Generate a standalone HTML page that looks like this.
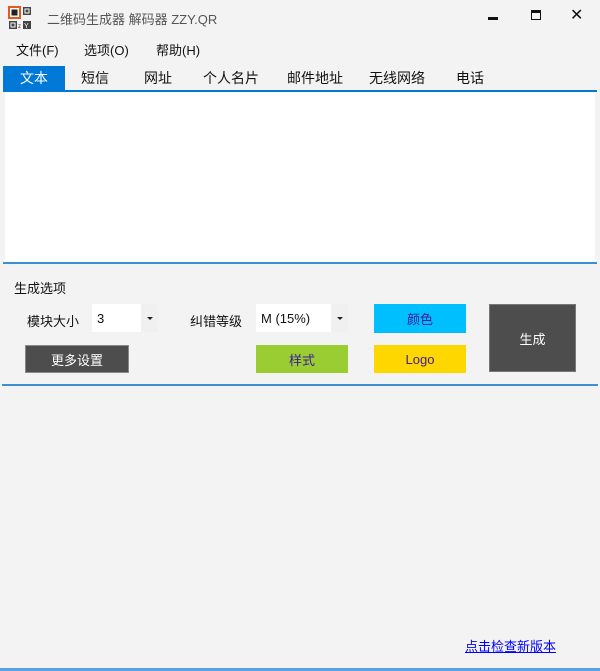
<!DOCTYPE html>
<html><head><meta charset="utf-8"><style>
*{margin:0;padding:0;box-sizing:border-box}
body{width:600px;height:671px;background:#f3f3f3;font-family:"Liberation Sans","Noto Sans CJK SC",sans-serif;font-size:13px;color:#111;position:relative;overflow:hidden}
.a{position:absolute}
.btn{position:absolute;display:flex;align-items:center;justify-content:center;font-size:13px}
.combo{position:absolute;background:#fff;height:28px;display:flex;align-items:center;padding-left:5px;font-size:13px}
.combo .dd{position:absolute;right:0;top:0;width:17px;height:28px;background:#f0f0f0;display:flex;align-items:center;justify-content:center}
.tri{width:0;height:0;border-left:3px solid transparent;border-right:3px solid transparent;border-top:3px solid #222}
</style></head><body>
<svg class="a" style="left:8px;top:6px" width="24" height="24" viewBox="0 0 24 24">
<rect x="0" y="0" width="13" height="13" fill="#e8581c"/><rect x="2" y="2" width="9" height="9" fill="#fff"/><rect x="3.5" y="3.5" width="6" height="6" fill="#222"/>
<rect x="15" y="1" width="8" height="8" fill="#444"/><rect x="16.5" y="2.5" width="5" height="5" fill="#fff"/><rect x="17.5" y="3.5" width="3" height="3" fill="#444"/>
<rect x="1" y="15" width="8" height="8" fill="#444"/><rect x="2.5" y="16.5" width="5" height="5" fill="#fff"/><rect x="3.5" y="17.5" width="3" height="3" fill="#444"/>
<text x="10" y="22" font-size="6" fill="#333" font-family="Liberation Sans">z</text><rect x="15" y="15" width="8" height="8" fill="#444"/><text x="16" y="22" font-size="7" fill="#fff" font-family="Liberation Sans">Y</text>
</svg>
<div class="a" style="left:47px;top:9px;font-size:13px;color:#555">二维码生成器 解码器 ZZY.QR</div>
<div class="a" style="left:488px;top:17px;width:10px;height:3px;background:#111"></div>
<div class="a" style="left:531px;top:10px;width:10px;height:10px;border:1.5px solid #111;border-top-width:3px"></div>
<div class="a" style="left:570px;top:5px;font-size:16px">✕</div>
<div class="a" style="left:16px;top:40px">文件(F)</div>
<div class="a" style="left:84px;top:40px">选项(O)</div>
<div class="a" style="left:156px;top:40px">帮助(H)</div>
<div class="a" style="left:3px;top:66px;width:62px;height:25px;background:#0078d7"></div>
<div class="a" style="left:0;top:68px;width:600px;font-size:14px">
<span class="a" style="left:20px;color:#fff">文本</span>
<span class="a" style="left:81px">短信</span>
<span class="a" style="left:144px">网址</span>
<span class="a" style="left:203px">个人名片</span>
<span class="a" style="left:287px">邮件地址</span>
<span class="a" style="left:369px">无线网络</span>
<span class="a" style="left:456px">电话</span>
</div>
<div class="a" style="left:3px;top:90px;width:594px;height:2px;background:#0078d7"></div>
<div class="a" style="left:5px;top:92px;width:590px;height:170px;background:#fff"></div>
<div class="a" style="left:3px;top:262px;width:594px;height:2px;background:#3c8fd6"></div>
<div class="a" style="left:14px;top:278px">生成选项</div>
<div class="a" style="left:27px;top:311px;font-size:13px">模块大小</div>
<div class="combo" style="left:92px;top:304px;width:66px">3<div class="dd"><div class="tri"></div></div></div>
<div class="a" style="left:190px;top:311px;font-size:13px">纠错等级</div>
<div class="combo" style="left:256px;top:304px;width:92px">M (15%)<div class="dd"><div class="tri"></div></div></div>
<div class="btn" style="left:374px;top:304px;width:92px;height:29px;background:#00bfff;color:#3b1a9a">颜色</div>
<div class="btn" style="left:489px;top:304px;width:87px;height:68px;background:#4d4d4d;color:#fff;border:1px solid #777">生成</div>
<div class="btn" style="left:25px;top:345px;width:104px;height:28px;background:#4d4d4d;color:#fff;border:1px solid #888">更多设置</div>
<div class="btn" style="left:256px;top:345px;width:92px;height:28px;background:#9acd32;color:#3b1a9a">样式</div>
<div class="btn" style="left:374px;top:345px;width:92px;height:28px;background:#ffd700;color:#3b1a9a">Logo</div>
<div class="a" style="left:2px;top:384px;width:596px;height:2px;background:#3c8fd6"></div>
<div class="a" style="left:465px;top:636px;font-size:13px;color:#00f;text-decoration:underline">点击检查新版本</div>
<div class="a" style="left:0;top:668px;width:600px;height:3px;background:#5aa0e0"></div>
</body></html>
